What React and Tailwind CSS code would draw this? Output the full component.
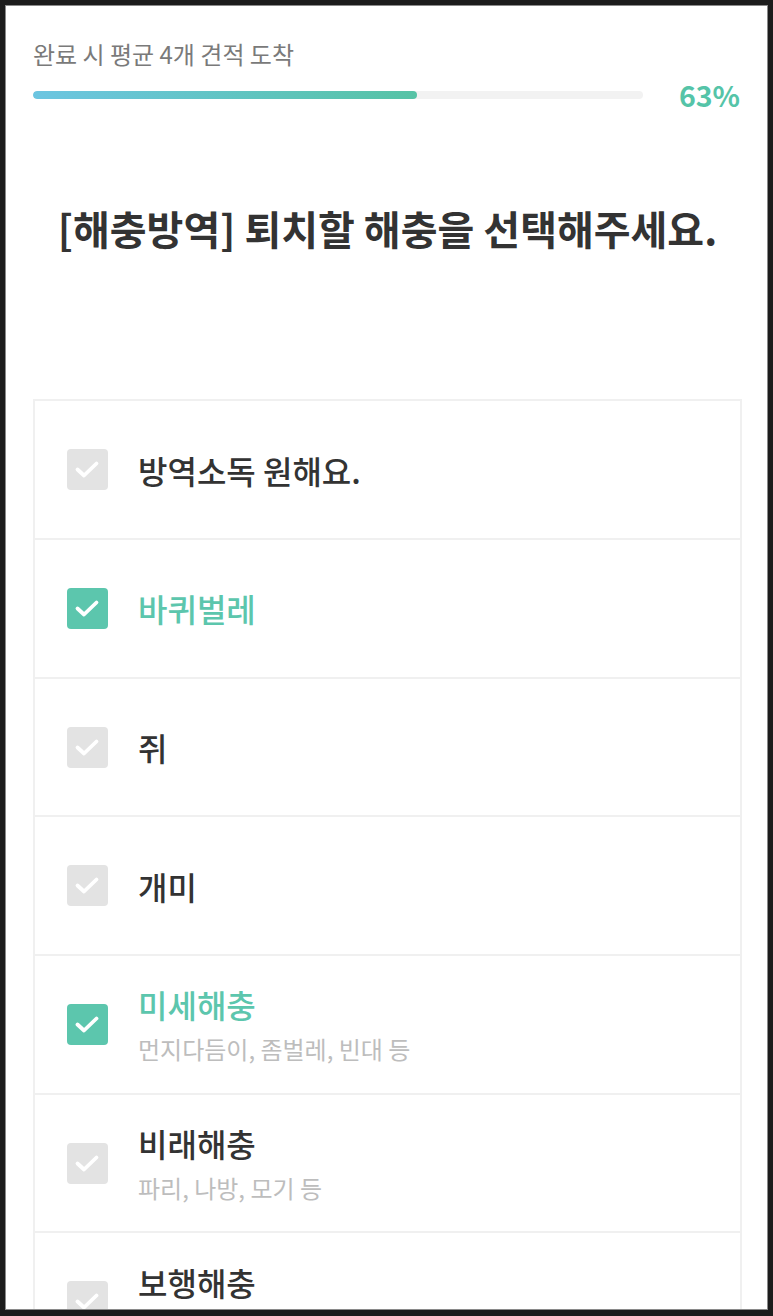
import React from 'react';

const items = [
  { label: '방역소독 원해요.', checked: false },
  { label: '바퀴벌레', checked: true },
  { label: '쥐', checked: false },
  { label: '개미', checked: false },
  { label: '미세해충', sub: '먼지다듬이, 좀벌레, 빈대 등', checked: true },
  { label: '비래해충', sub: '파리, 나방, 모기 등', checked: false },
  { label: '보행해충', sub: '돈벌레, 거미, 지네 등', checked: false },
];

const CheckBox = ({ checked }) => (
  <div
    className={
      'w-[41px] h-[41px] shrink-0 rounded-[4px] flex items-center justify-center ' +
      (checked ? 'bg-[#5cc6ad]' : 'bg-[#e3e3e3]')
    }
  >
    <svg width="41" height="41" viewBox="0 0 41 41" fill="none">
      <path d="M10.5 20.5l6.5 6L29.5 14.5" stroke="white" strokeWidth="3.8" strokeLinecap="round" strokeLinejoin="round" />
    </svg>
  </div>
);

export default function App() {
  return (
    <div className="h-[1316px] bg-[#1c1c1c] pt-[5px] pl-[5px] pr-[5px] pb-[6px] font-['Noto_Sans_CJK_KR','Noto_Sans',sans-serif]">
      <div className="h-full bg-white border border-[#8a8a8a] overflow-hidden">
        <div className="pl-[27px] pr-[25px] pt-[32px]">
          {/* progress */}
          <p className="text-[24px] leading-[32px] text-[#7a7a7a]">완료 시 평균 4개 견적 도착</p>
          <div className="flex items-center gap-[36px] mt-[5px] pr-[2px]">
            <div className="flex-1 h-[8px] rounded-full bg-[#f2f2f2] overflow-hidden">
              <div className="h-full w-[63%] rounded-full bg-gradient-to-r from-[#6cc5e1] to-[#56c3a5]" />
            </div>
            <span className="text-[28.5px] leading-[40px] font-bold text-[#55c4a8]">63%</span>
          </div>

          {/* title */}
          <h1 className="mt-[87px] text-center text-[40px] leading-[52px] font-bold text-[#333]">
            [해충방역] 퇴치할 해충을 선택해주세요.
          </h1>

          {/* options */}
          <ul className="mt-[145px] border-2 border-[#f0f0f0]">
            {items.map((it, i) => (
              <li
                key={i}
                className={
                  'flex items-center gap-[30px] pl-[32px] ' +
                  (i > 0 ? 'h-[138.7px] border-t-2 border-[#f0f0f0]' : 'h-[137px]')
                }
              >
                <CheckBox checked={it.checked} />
                <div className="flex flex-col">
                  <span
                    className={
                      'text-[32px] leading-[42px] font-medium ' +
                      (it.checked ? 'text-[#5cc6ad]' : 'text-[#333]')
                    }
                  >
                    {it.label}
                  </span>
                  {it.sub && (
                    <span className="text-[24px] leading-[32px] mt-[8px] text-[#bdbdbd]">{it.sub}</span>
                  )}
                </div>
              </li>
            ))}
          </ul>
        </div>
      </div>
    </div>
  );
}
